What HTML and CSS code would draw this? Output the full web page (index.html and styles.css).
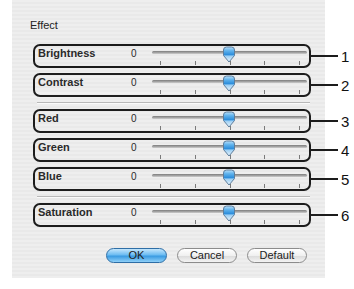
FILE: index.html
```html
<!DOCTYPE html>
<html lang="en">
<head>
    <meta charset="UTF-8">
    <meta name="viewport" content="width=device-width, initial-scale=1.0">
    <title>Effect</title>
    <link rel="stylesheet" href="styles.css">
</head>
<body>
    <div class="panel">
        <p class="title">Effect</p>
        <div class="rows">
            <div class="callout">
                <div class="box">
                    <span class="label">Brightness</span>
                    <span class="value">0</span>
                    <div class="slider">
                        <div class="track"></div>
                        <div class="ticks"><i></i><i></i><i></i><i></i><i></i></div>
                        <svg class="thumb" width="14" height="17" viewBox="0 0 14 17"><use href="#thumb"/></svg>
                    </div>
                </div>
                <span class="leader"></span>
                <span class="num">1</span>
            </div>
            <div class="callout">
                <div class="box">
                    <span class="label">Contrast</span>
                    <span class="value">0</span>
                    <div class="slider">
                        <div class="track"></div>
                        <div class="ticks"><i></i><i></i><i></i><i></i><i></i></div>
                        <svg class="thumb" width="14" height="17" viewBox="0 0 14 17"><use href="#thumb"/></svg>
                    </div>
                </div>
                <span class="leader"></span>
                <span class="num">2</span>
            </div>
            <div class="sep"></div>
            <div class="callout">
                <div class="box">
                    <span class="label">Red</span>
                    <span class="value">0</span>
                    <div class="slider">
                        <div class="track"></div>
                        <div class="ticks"><i></i><i></i><i></i><i></i><i></i></div>
                        <svg class="thumb" width="14" height="17" viewBox="0 0 14 17"><use href="#thumb"/></svg>
                    </div>
                </div>
                <span class="leader"></span>
                <span class="num">3</span>
            </div>
            <div class="callout">
                <div class="box">
                    <span class="label">Green</span>
                    <span class="value">0</span>
                    <div class="slider">
                        <div class="track"></div>
                        <div class="ticks"><i></i><i></i><i></i><i></i><i></i></div>
                        <svg class="thumb" width="14" height="17" viewBox="0 0 14 17"><use href="#thumb"/></svg>
                    </div>
                </div>
                <span class="leader"></span>
                <span class="num">4</span>
            </div>
            <div class="callout">
                <div class="box">
                    <span class="label">Blue</span>
                    <span class="value">0</span>
                    <div class="slider">
                        <div class="track"></div>
                        <div class="ticks"><i></i><i></i><i></i><i></i><i></i></div>
                        <svg class="thumb" width="14" height="17" viewBox="0 0 14 17"><use href="#thumb"/></svg>
                    </div>
                </div>
                <span class="leader"></span>
                <span class="num">5</span>
            </div>
            <div class="sep"></div>
            <div class="callout">
                <div class="box">
                    <span class="label">Saturation</span>
                    <span class="value">0</span>
                    <div class="slider">
                        <div class="track"></div>
                        <div class="ticks"><i></i><i></i><i></i><i></i><i></i></div>
                        <svg class="thumb" width="14" height="17" viewBox="0 0 14 17"><use href="#thumb"/></svg>
                    </div>
                </div>
                <span class="leader"></span>
                <span class="num">6</span>
            </div>
        </div>
        <div class="buttons">
            <button class="btn btn-ok">OK</button>
            <button class="btn">Cancel</button>
            <button class="btn">Default</button>
        </div>
    </div>

    <!-- shared slider knob -->
    <svg width="0" height="0" style="position:absolute">
        <defs>
            <linearGradient id="knob" x1="0" y1="0" x2="0" y2="1">
                <stop offset="0" stop-color="#b9e0fb"/>
                <stop offset="0.25" stop-color="#5fb2ec"/>
                <stop offset="0.5" stop-color="#2f8fdc"/>
                <stop offset="0.62" stop-color="#9fd0f4"/>
                <stop offset="1" stop-color="#eef7fd"/>
            </linearGradient>
            <g id="thumb">
                <path d="M1.5 4 Q1.5 1 4.5 1 H9.5 Q12.5 1 12.5 4 V9.5 L7 16 L1.5 9.5 Z" fill="url(#knob)" stroke="#5c7d9c" stroke-width="1"/>
            </g>
        </defs>
    </svg>
</body>
</html>
```

FILE: styles.css
```css
*{
    margin: 0;
    padding: 0;
    box-sizing: border-box;
}

body{
    background-color: #ffffff;
    font-family: "Liberation Sans", Arial, sans-serif;
}

.panel{
    margin-left: 12px;
    width: 313px;
    height: 278px;
    padding-top: 19px;
    background: repeating-linear-gradient(to bottom, #eeeeee 0 2px, #e9e9e9 2px 4px);
}

.title{
    padding-left: 18px;
    font-size: 11px;
    line-height: 13px;
    color: #222;
}

.rows{
    margin-top: 12px;
    margin-left: 21px;
    display: flex;
    flex-direction: column;
    gap: 5px;
}

.callout{
    display: flex;
    align-items: center;
}

.callout > *{
    flex-shrink: 0;
}

.box{
    width: 278px;
    height: 24px;
    border: 2px solid #1c1c1c;
    border-radius: 7px;
    display: flex;
    align-items: flex-start;
}

.label{
    width: 96px;
    padding-left: 3px;
    padding-top: 1px;
    font-size: 11px;
    line-height: 13px;
    font-weight: bold;
    color: #2a2a2a;
}

.value{
    width: 21px;
    padding-top: 1px;
    font-size: 10px;
    line-height: 13px;
    color: #2a2a2a;
}

.slider{
    position: relative;
    width: 155px;
}

.track{
    margin-top: 5px;
    height: 3px;
    border-radius: 2px;
    background: linear-gradient(to bottom, #7c7c7c, #a8a8a8 60%, #cfcfcf);
}

.ticks{
    margin-top: 7px;
    padding: 0 7px 0 8px;
    display: flex;
    justify-content: space-between;
}

.ticks i{
    width: 1px;
    height: 4px;
    background-color: #7a7a7a;
}

.thumb{
    position: absolute;
    left: 70px;
    top: 0;
}

.leader{
    width: 27px;
    height: 1.5px;
    background-color: #1c1c1c;
}

.num{
    margin-left: 3px;
    font-size: 15px;
    color: #111;
}

.sep{
    margin: 0 0 0 4px;
    width: 273px;
    height: 2px;
    border-top: 1px solid #b8b8b8;
    border-bottom: 1px solid #fafafa;
}

.buttons{
    margin-top: 21px;
    padding-right: 18px;
    display: flex;
    justify-content: flex-end;
    gap: 10px;
}

.btn{
    width: 60px;
    height: 15px;
    border: 1px solid #8c8c8c;
    border-radius: 8px;
    background: linear-gradient(to bottom, #ffffff, #f0f0f0 50%, #dcdcdc 55%, #f4f4f4);
    font-family: "Liberation Sans", Arial, sans-serif;
    font-size: 11px;
    line-height: 13px;
    color: #222;
}

.btn-ok{
    width: 61px;
    border-color: #2e6ea6;
    background: linear-gradient(to bottom, #c4e6fc, #6cbcf2 45%, #3a9be2 55%, #8fd0f8);
}
```
